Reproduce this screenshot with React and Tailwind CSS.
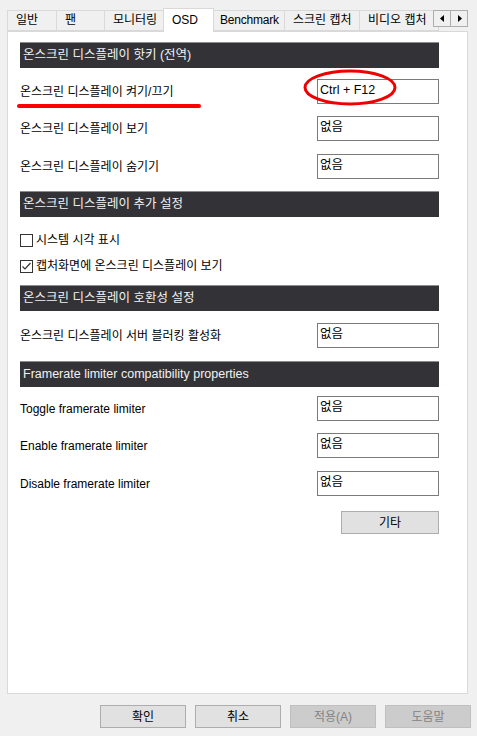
const font = { fontFamily: '"Liberation Sans", "Noto Sans CJK KR", sans-serif' }

function Tab({ label, w, active }) {
    if (active) {
        return (
            <div className={`h-[24px] ${w} bg-white border border-b-0 border-[#d9d9d9] pl-[8px] pt-[2px] text-[12px] leading-[18px] relative z-10 -mb-px`}>
                {label}
            </div>
        )
    }
    return (
        <div className={`h-[21px] ${w} bg-[#f0f0f0] border border-[#d9d9d9] -ml-px first:ml-0 pl-[8px] text-[12px] leading-[19px] overflow-hidden whitespace-nowrap`}>
            {label}
        </div>
    )
}

function Header({ children, mt }) {
    return (
        <div className={`${mt} w-[419px] h-[26px] bg-[#323237] border-t border-[#8c8c8c] pl-[3px] text-[12.5px] leading-[24px] text-[#f2f2f2]`}>
            {children}
        </div>
    )
}

function Row({ label, value, mt }) {
    return (
        <div className={`${mt} w-[419px] flex items-center justify-between`}>
            <span className="text-[12px] text-black">{label}</span>
            <div className="w-[122px] h-[25px] border border-[#7a7a7a] bg-white pl-[2px] text-[12.5px] leading-[20px]">{value}</div>
        </div>
    )
}

function Check({ label, checked, mt }) {
    return (
        <div className={`${mt} flex items-center gap-[3px]`}>
            <div className="w-[13px] h-[13px] border border-[#333] bg-white flex items-center justify-center">
                {checked && (
                    <svg width="11" height="11" viewBox="0 0 11 11">
                        <path d="M1.5 5.5 L4 8 L9.5 2" fill="none" stroke="#333" strokeWidth="1.2" />
                    </svg>
                )}
            </div>
            <span className="text-[12px] leading-[14px]">{label}</span>
        </div>
    )
}

function Btn({ label, disabled }) {
    return (
        <div className={`w-[86px] h-[23px] border flex items-center justify-center text-[12px] ${disabled ? 'bg-[#cccccc] border-[#bfbfbf] text-[#838383]' : 'bg-[#e1e1e1] border-[#adadad] text-black'}`}>
            {label}
        </div>
    )
}

export default function App() {
    return (
        <div className="w-[477px] h-[736px] bg-[#f0f0f0] relative overflow-hidden" style={font}>
            <div className="pt-[7px] pl-[7px] flex items-end h-[31px] relative">
                <Tab label="일반" w="w-[50px]" />
                <Tab label="팬" w="w-[49px]" />
                <Tab label="모니터링" w="w-[60px]" />
                <Tab label="OSD" w="w-[51px] -ml-px" active />
                <Tab label="Benchmark" w="w-[72px] !pl-[6px] tracking-[-0.2px]" />
                <Tab label="스크린 캡처" w="w-[76px]" />
                <Tab label="비디오 캡처" w="w-[80px]" />
                <div className="absolute left-[433px] top-[10px] flex z-20">
                    <div className="w-[18px] h-[17px] bg-[#f0f0f0] border border-[#adadad] flex items-center justify-center">
                        <svg width="5" height="7" viewBox="0 0 5 7"><path d="M4 0 L0 3.5 L4 7 Z" fill="#000" /></svg>
                    </div>
                    <div className="w-[18px] h-[17px] -ml-px bg-[#f0f0f0] border border-[#adadad] flex items-center justify-center">
                        <svg width="5" height="7" viewBox="0 0 5 7"><path d="M1 0 L5 3.5 L1 7 Z" fill="#000" /></svg>
                    </div>
                </div>
            </div>

            <div className="ml-[7px] w-[461px] h-[663px] bg-white border border-[#d9d9d9] pl-[12px] flex flex-col relative">
                <Header mt="mt-[10px]">온스크린 디스플레이 핫키 (전역)</Header>
                <Row mt="mt-[11px]" label="온스크린 디스플레이 켜기/끄기" value="Ctrl + F12" />
                <Row mt="mt-[12px]" label="온스크린 디스플레이 보기" value="없음" />
                <Row mt="mt-[13px]" label="온스크린 디스플레이 숨기기" value="없음" />
                <Header mt="mt-[12px]">온스크린 디스플레이 추가 설정</Header>
                <Check mt="mt-[16px]" label="시스템 시각 표시" />
                <Check mt="mt-[12px]" label="캡처화면에 온스크린 디스플레이 보기" checked />
                <Header mt="mt-[12px]">온스크린 디스플레이 호환성 설정</Header>
                <Row mt="mt-[12px]" label="온스크린 디스플레이 서버 블러킹 활성화" value="없음" />
                <Header mt="mt-[13px]">Framerate limiter compatibility properties</Header>
                <Row mt="mt-[9px]" label="Toggle framerate limiter" value="없음" />
                <Row mt="mt-[12px]" label="Enable framerate limiter" value="없음" />
                <Row mt="mt-[13px]" label="Disable framerate limiter" value="없음" />
                <div className="mt-[15px] w-[419px] flex justify-end">
                    <div className="w-[98px] h-[23px] bg-[#e1e1e1] border border-[#adadad] flex items-center justify-center text-[12px]">기타</div>
                </div>

                <div className="absolute left-[9px] top-[72px] w-[184px] h-[4px] rounded-full bg-[#ff0000]" />
                <svg className="absolute left-[295px] top-[37px]" width="94" height="37" viewBox="0 0 94 37">
                    <ellipse cx="47" cy="18.5" rx="45" ry="16.5" fill="none" stroke="#ee0000" strokeWidth="3" />
                </svg>
            </div>

            <div className="mt-[11px] pl-[100px] flex gap-[9px]">
                <Btn label="확인" />
                <Btn label="취소" />
                <Btn label="적용(A)" disabled />
                <Btn label="도움말" disabled />
            </div>
        </div>
    )
}
